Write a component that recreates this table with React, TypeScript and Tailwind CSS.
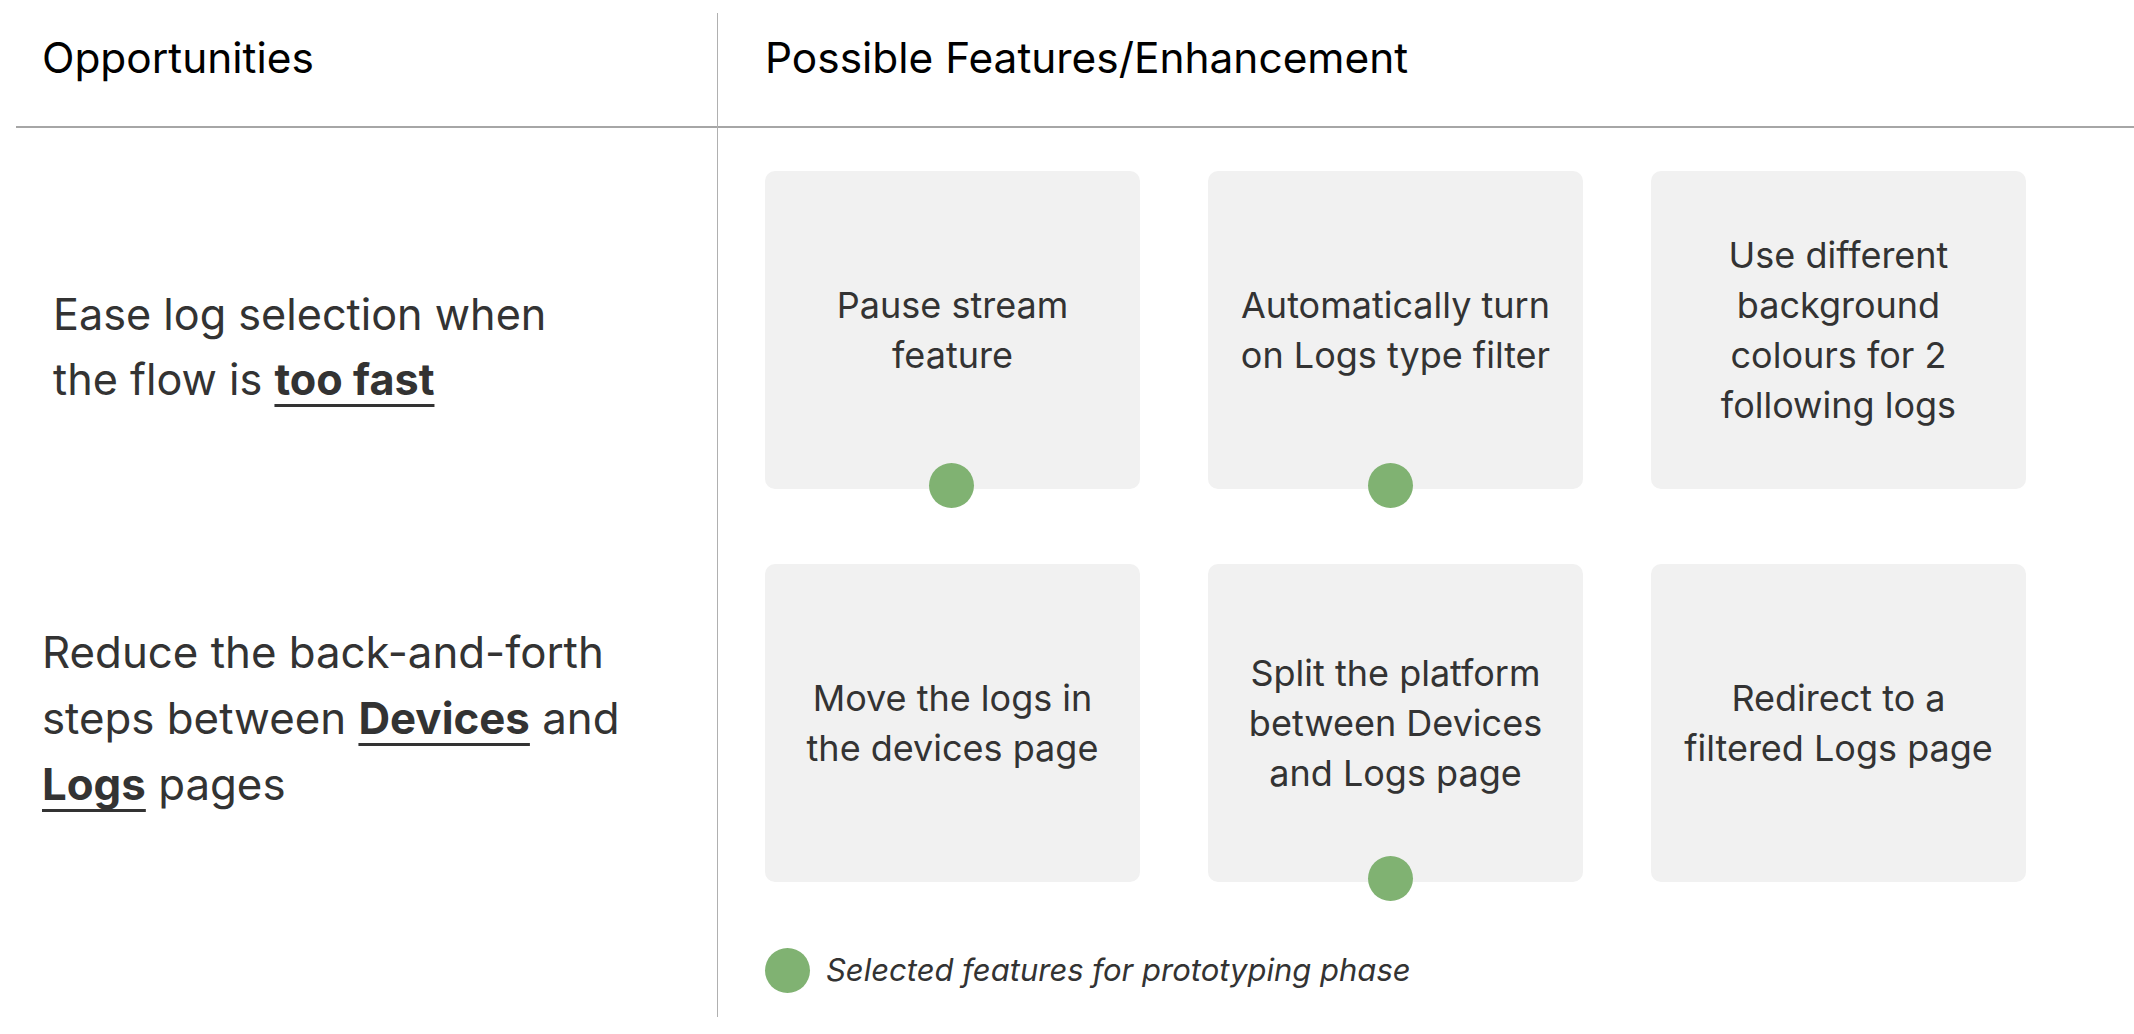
const features = [
  { lines: ['Pause stream', 'feature'], dot: 'left-[164px]' },
  { lines: ['Automatically turn', 'on Logs type filter'], dot: 'left-[160px]' },
  { lines: ['Use different', 'background', 'colours for 2', 'following logs'], dot: '' },
  { lines: ['Move the logs in', 'the devices page'], dot: '' },
  { lines: ['Split the platform', 'between Devices', 'and Logs page'], dot: 'left-[160px]' },
  { lines: ['Redirect to a', 'filtered Logs page'], dot: '' },
];

const Dot = ({ className = '' }: { className?: string }) => (
  <span className={`block w-[45px] h-[45px] rounded-full bg-[#80b272] ${className}`} />
);

const Strong = ({ children }: { children: string }) => (
  <span className="font-bold underline decoration-[3px] underline-offset-[9px]">{children}</span>
);

export default function App() {
  return (
    <div
      className="w-[2134px] h-[1034px] bg-white pt-[13px] pl-[16px] overflow-hidden"
      style={{ fontFamily: 'Inter, "Noto Sans", sans-serif' }}
    >
      <div className="flex h-[1004px]">
        {/* opportunities column */}
        <div className="w-[702px] shrink-0 border-r border-[#b0b0b0] flex flex-col">
          <div className="h-[115px] border-b-2 border-[#a6a6a6] pt-[24px] pl-[26px]">
            <h2 className="text-[42.4px] leading-none text-black">Opportunities</h2>
          </div>
          <div className="pt-[154px] text-[#333333]">
            <p className="pl-[37px] text-[43.2px] leading-[65px]">
              Ease log selection when
              <br />
              the flow is <Strong>too fast</Strong>
            </p>
            <p className="pl-[26px] mt-[208px] text-[43.8px] leading-[66px]">
              Reduce the back-and-forth
              <br />
              steps between <Strong>Devices</Strong> and
              <br />
              <Strong>Logs</Strong> pages
            </p>
          </div>
        </div>

        {/* features column */}
        <div className="flex-1 flex flex-col">
          <div className="h-[115px] border-b-2 border-[#a6a6a6] pt-[24px] pl-[47px]">
            <h2 className="text-[42.4px] leading-none text-black">Possible Features/Enhancement</h2>
          </div>
          <div className="pt-[43px] pl-[47px]">
            <div className="grid grid-cols-[375px_375px_375px] grid-rows-[318px_318px] gap-x-[68px] gap-y-[75px]">
              {features.map((f, i) => (
                <div
                  key={i}
                  className="relative rounded-[10px] bg-[#f1f1f1] flex items-center justify-center text-center text-[36px] leading-[50px] text-[#333333]"
                >
                  <p>
                    {f.lines.map((l, j) => (
                      <span key={j} className="block">
                        {l}
                      </span>
                    ))}
                  </p>
                  {f.dot && <Dot className={`absolute bottom-[-19px] ${f.dot}`} />}
                </div>
              ))}
            </div>
            <div className="mt-[65px] flex items-center gap-[16px]">
              <Dot className="w-[44px] h-[44px]" />
              <span className="text-[31px] italic text-[#333333]">Selected features for prototyping phase</span>
            </div>
          </div>
        </div>
      </div>
    </div>
  );
}
